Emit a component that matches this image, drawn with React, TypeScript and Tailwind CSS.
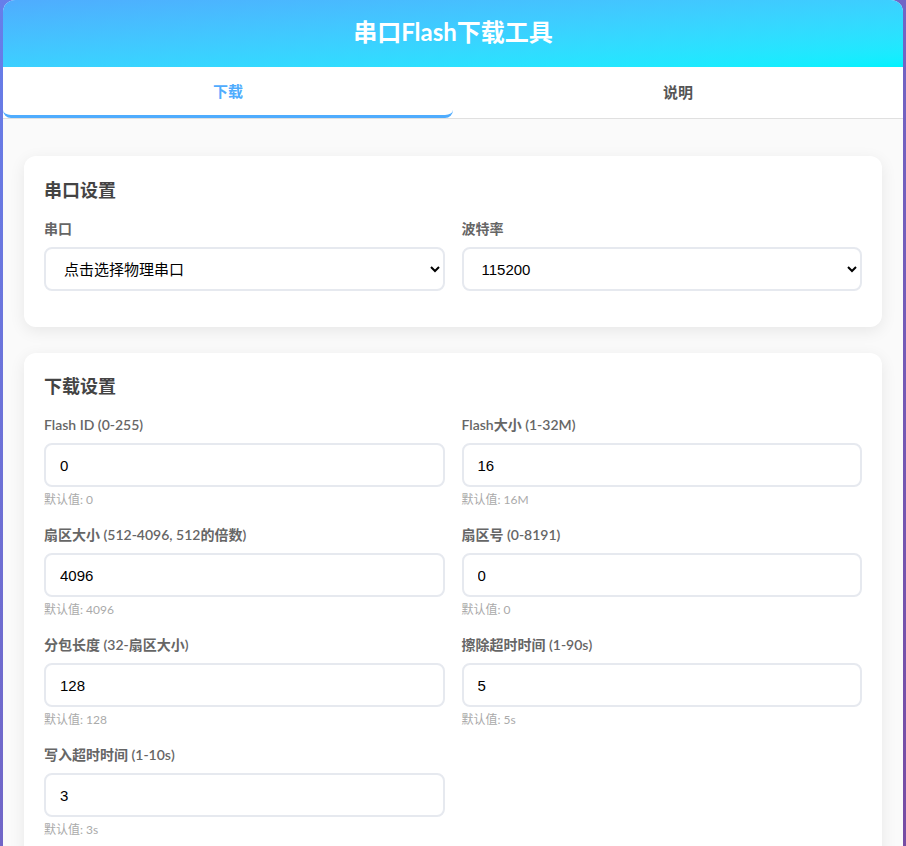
import { useState } from "react";

type Field = {
  label: string;
  value: string;
  hint: string;
};

const fields: Field[] = [
  { label: "Flash ID (0-255)", value: "0", hint: "默认值: 0" },
  { label: "Flash大小 (1-32M)", value: "16", hint: "默认值: 16M" },
  { label: "扇区大小 (512-4096, 512的倍数)", value: "4096", hint: "默认值: 4096" },
  { label: "扇区号 (0-8191)", value: "0", hint: "默认值: 0" },
  { label: "分包长度 (32-扇区大小)", value: "128", hint: "默认值: 128" },
  { label: "擦除超时时间 (1-90s)", value: "5", hint: "默认值: 5s" },
  { label: "写入超时时间 (1-10s)", value: "3", hint: "默认值: 3s" },
];

const inputCls =
  "w-full h-[44px] px-[14px] border-2 border-[#e6e9ef] rounded-lg bg-white text-[15px] text-black font-['Liberation_Sans','Noto_Sans_CJK_SC',sans-serif] focus:outline-none focus:border-[#4facfe]";

const labelCls = "block mb-2 text-[14px] leading-[20px] font-semibold text-[#666]";

export default function App() {
  const [tab, setTab] = useState<"download" | "help">("download");

  return (
    <div className="min-h-screen bg-gradient-to-br from-[#667eea] to-[#764ba2] font-['Lato','Noto_Sans_CJK_SC',sans-serif]">
      <div className="max-w-[900px] mx-auto bg-white rounded-t-xl overflow-hidden min-h-screen">
        {/* Header */}
        <div className="h-[67px] pb-1 flex items-center justify-center bg-gradient-to-br from-[#4facfe] to-[#00f2fe]">
          <h1 className="text-[24px] font-bold text-white">串口Flash下载工具</h1>
        </div>

        {/* Tabs */}
        <div className="flex border-b border-[#e0e0e0] bg-white">
          <button
            onClick={() => setTab("download")}
            className={
              tab === "download"
                ? "flex-1 h-[51px] text-[15px] font-bold text-[#4facfe] border-b-[3px] border-[#4facfe] rounded-lg"
                : "flex-1 h-[51px] text-[15px] font-bold text-[#555]"
            }
          >
            下载
          </button>
          <button
            onClick={() => setTab("help")}
            className={
              tab === "help"
                ? "flex-1 h-[51px] text-[15px] font-bold text-[#4facfe] border-b-[3px] border-[#4facfe] rounded-lg"
                : "flex-1 h-[51px] text-[15px] font-bold text-[#555]"
            }
          >
            说明
          </button>
        </div>

        {/* Content */}
        <div className="bg-[#fafafa] pt-[37px] px-[21px] pb-6">
          {/* Serial settings */}
          <div className="bg-white rounded-xl px-5 pt-[21px] pb-[36px] mb-[26px] shadow-[0_4px_16px_rgba(0,0,0,0.08)]">
            <h2 className="text-[18px] leading-[27px] font-bold text-[#444] mb-[15px]">串口设置</h2>
            <div className="grid grid-cols-2 gap-[17px]">
              <div>
                <label className={labelCls}>串口</label>
                <select className={inputCls}>
                  <option>点击选择物理串口</option>
                </select>
              </div>
              <div>
                <label className={labelCls}>波特率</label>
                <select className={inputCls} defaultValue="115200">
                  <option>9600</option>
                  <option>57600</option>
                  <option>115200</option>
                  <option>921600</option>
                </select>
              </div>
            </div>
          </div>

          {/* Download settings */}
          <div className="bg-white rounded-xl px-5 pt-5 pb-6 shadow-[0_4px_16px_rgba(0,0,0,0.08)]">
            <h2 className="text-[18px] leading-[27px] font-bold text-[#444] mb-[15px]">下载设置</h2>
            <div className="grid grid-cols-2 gap-[17px]">
              {fields.map((f) => (
                <div key={f.label}>
                  <label className={labelCls}>{f.label}</label>
                  <input type="text" defaultValue={f.value} className={inputCls} />
                  <div className="mt-[5px] text-[12px] leading-[16px] text-[#aaa]">{f.hint}</div>
                </div>
              ))}
            </div>
          </div>
        </div>
      </div>
    </div>
  );
}
